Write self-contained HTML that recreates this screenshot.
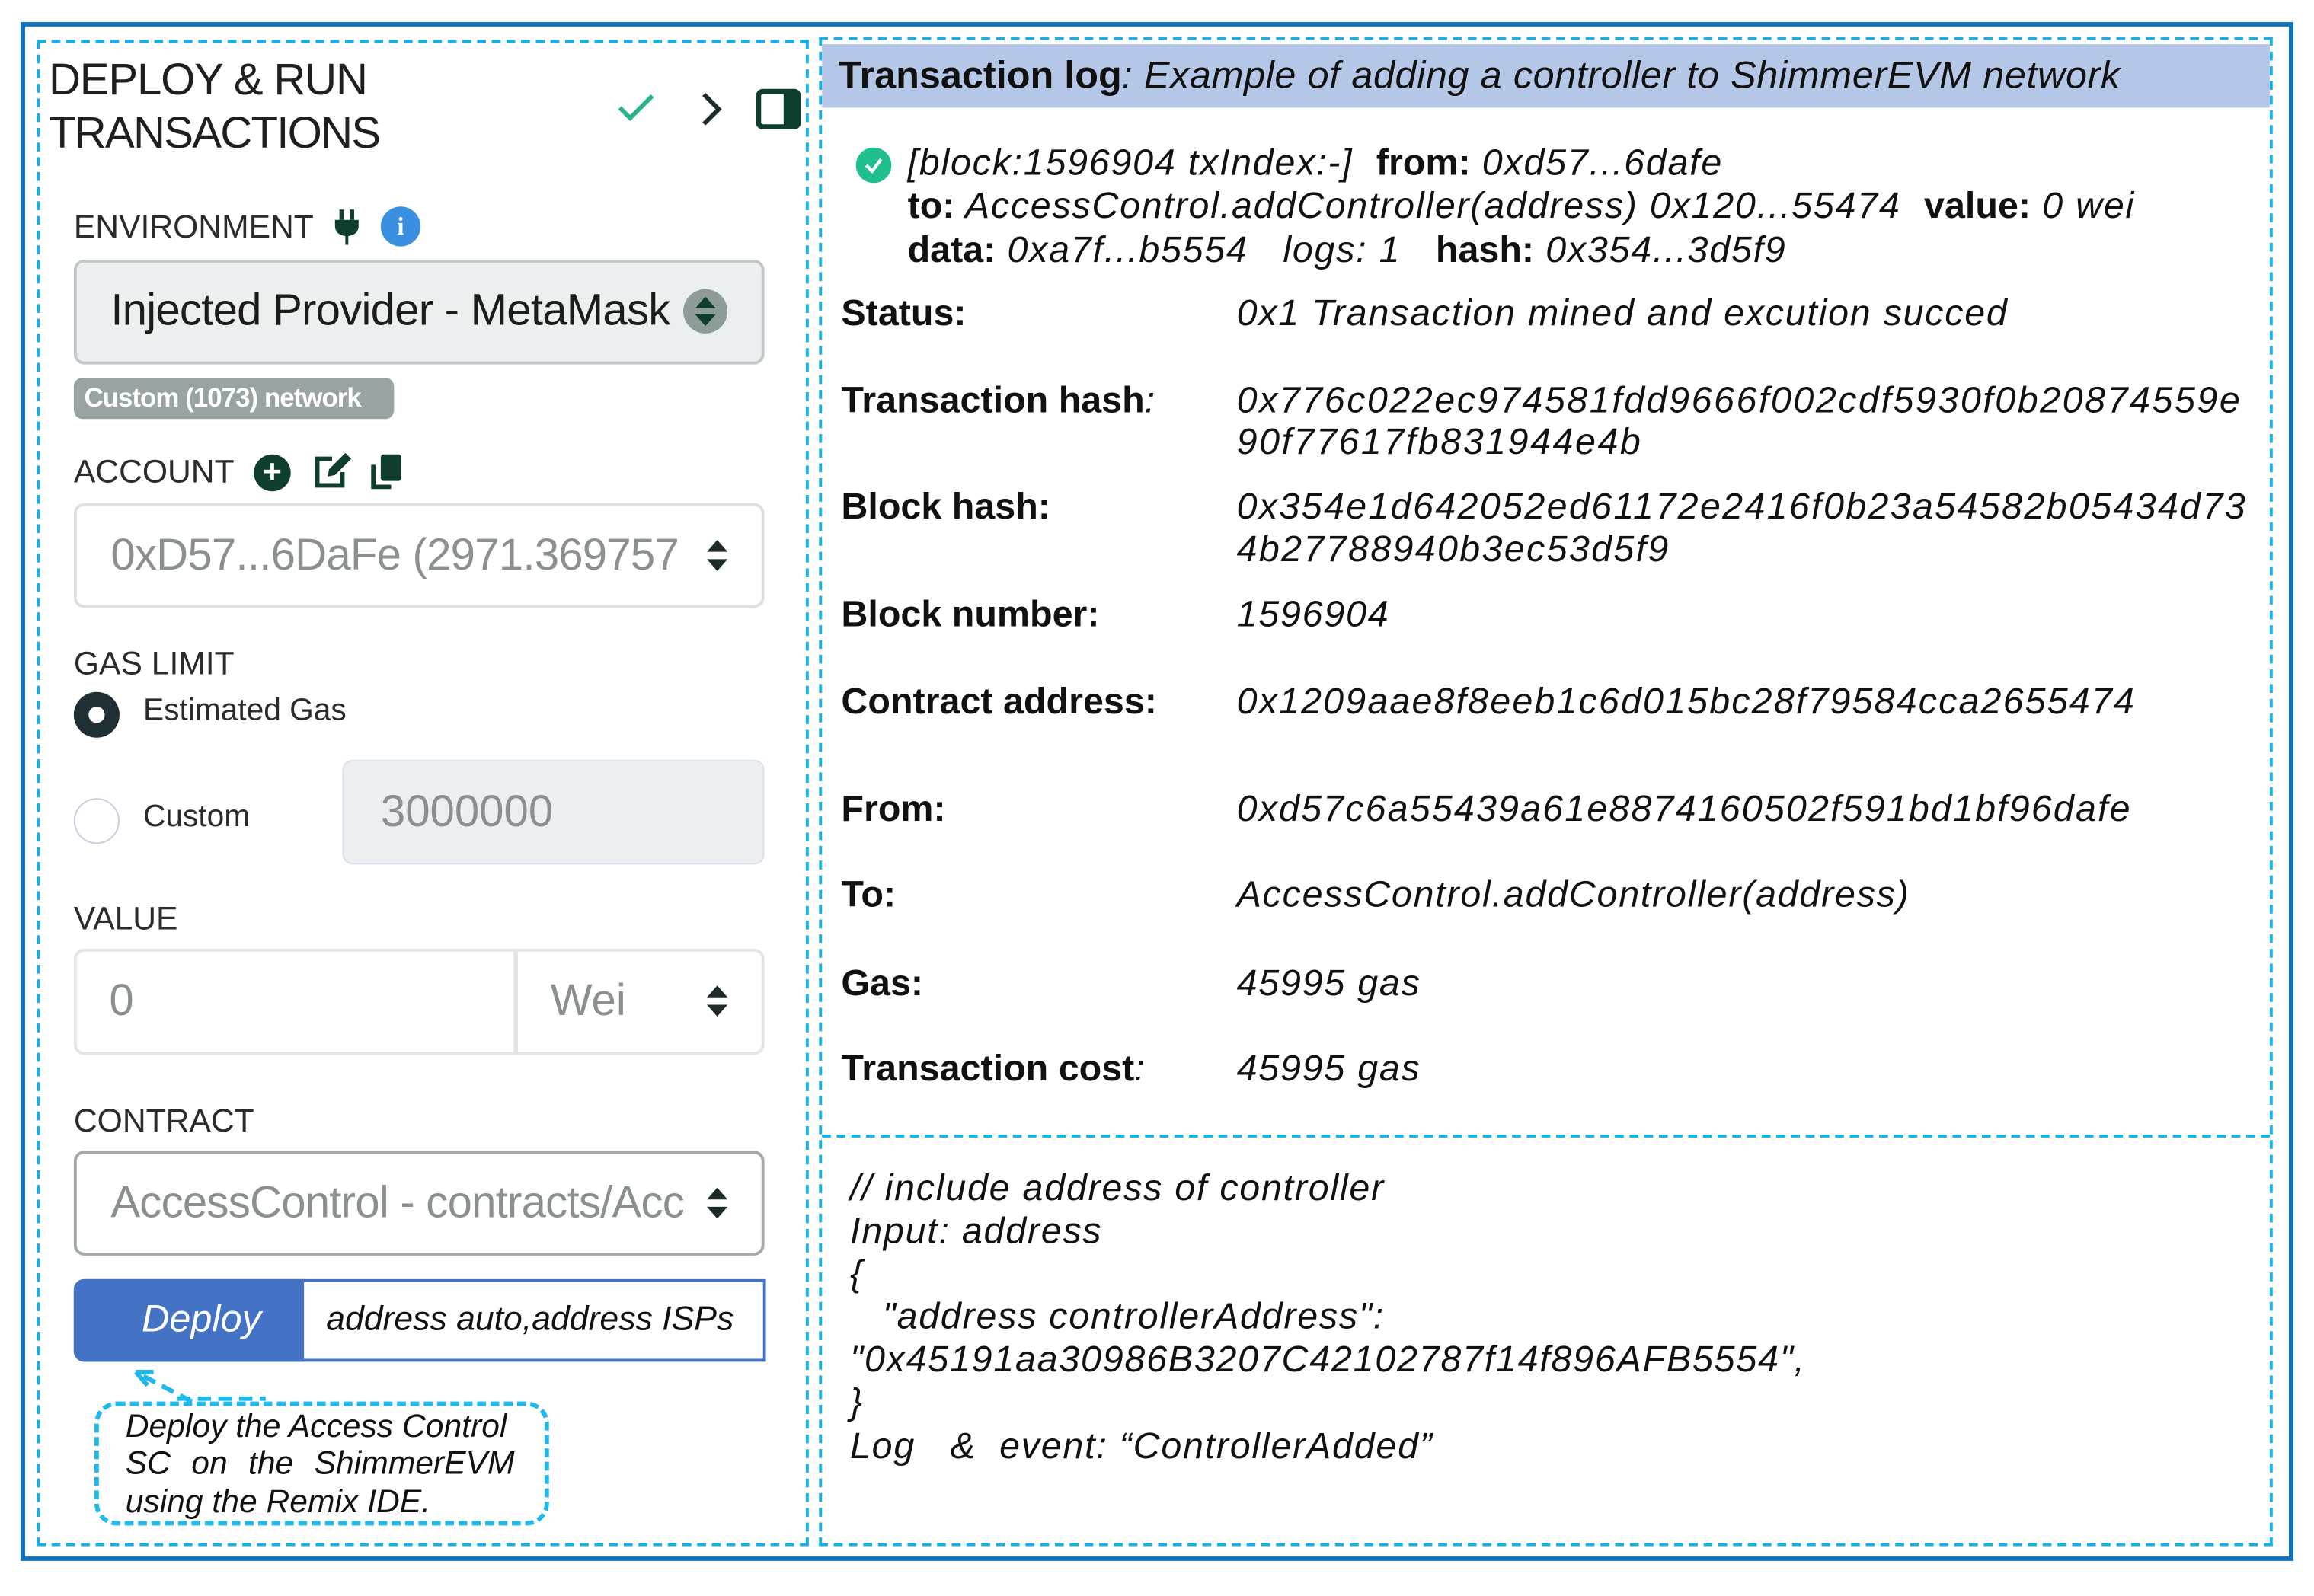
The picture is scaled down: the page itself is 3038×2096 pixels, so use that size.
<!DOCTYPE html>
<html><head><meta charset="utf-8"><style>
html,body{margin:0;padding:0;background:#fff;width:3038px;height:2095px;overflow:hidden}
#w{position:absolute;left:0;top:0;width:1568px;height:1082px;transform:scale(1.9375);transform-origin:0 0;font-family:"Liberation Sans",sans-serif;color:#222}
.a{position:absolute;white-space:nowrap}
.n{font-family:"Liberation Sans Narrow","Liberation Sans",sans-serif;color:#111}
.r{letter-spacing:0.9px}
.l{font-size:22px;color:#2b2b2b;transform:translateY(-50%)}
.c{transform:translateY(-50%)}
.box{position:absolute;box-sizing:border-box;border-radius:7px}
.i{font-style:italic}
.b{font-weight:bold;font-style:normal;letter-spacing:0}
</style></head><body><div id="w">
<div style="position:absolute;left:14px;top:15px;width:1540px;height:1043px;border:3px solid #0c74c4;box-sizing:border-box"></div>
<div style="position:absolute;left:25px;top:27px;width:523px;height:1021px;border:2.5px dashed #14b0ea;box-sizing:border-box"></div>
<div style="position:absolute;left:555px;top:25px;width:985px;height:1023px;border:2.5px dashed #14b0ea;box-sizing:border-box"></div>
<div style="position:absolute;left:557px;top:30px;width:981px;height:43px;background:#b4c7e7"></div>
<div style="position:absolute;left:557px;top:769px;width:981px;height:0;border-top:2.5px dashed #14b0ea"></div>

<!-- left -->
<div class="a c" style="left:33px;top:55px;font-size:30px;letter-spacing:-0.6px;color:#1f1f1f">DEPLOY &amp; RUN</div>
<div class="a c" style="left:33px;top:91px;font-size:30px;letter-spacing:-0.9px;color:#1f1f1f">TRANSACTIONS</div>
<svg class="a" style="left:417px;top:62px" width="28" height="22" viewBox="0 0 28 22"><path d="M3 11 L10 18 L25 3" fill="none" stroke="#2bb38e" stroke-width="3"/></svg>
<svg class="a" style="left:474px;top:62px" width="16" height="24" viewBox="0 0 16 24"><path d="M3 2 L13 12 L3 22" fill="none" stroke="#1c2b2b" stroke-width="3"/></svg>
<svg class="a" style="left:512px;top:60px" width="32" height="28" viewBox="0 0 32 28"><rect x="2" y="2" width="27" height="24" rx="3" fill="none" stroke="#0f3d2e" stroke-width="3.5"/><rect x="19" y="2" width="10" height="24" fill="#0f3d2e"/></svg>

<div class="a l" style="left:50px;top:154px">ENVIRONMENT</div>
<svg class="a" style="left:226px;top:142px" width="18" height="24" viewBox="0 0 18 24"><rect x="4" y="0" width="3" height="7" fill="#0f3d2e"/><rect x="11" y="0" width="3" height="7" fill="#0f3d2e"/><path d="M1 7 H17 V11 Q17 17 10 18 V24 H8 V18 Q1 17 1 11Z" fill="#0f3d2e"/></svg>
<div class="a" style="left:258px;top:140px;width:27px;height:27px;border-radius:50%;background:#3a8fe0;color:#fff;font:bold 17px 'Liberation Serif',serif;text-align:center;line-height:27px">i</div>
<div class="box" style="left:50px;top:176px;width:468px;height:71px;background:#eceff0;border:2px solid #c3c7ca"></div>
<div class="a c" style="left:75px;top:211px;font-size:30px;letter-spacing:-0.4px;color:#1c1c1c">Injected Provider - MetaMask</div>
<div class="a" style="left:463px;top:196px;width:30px;height:30px;border-radius:50%;background:#8d9c98"></div>
<svg class="a" style="left:469px;top:200px" width="18" height="22" viewBox="0 0 18 22"><path d="M9 1 L16 9 H2Z M2 13 H16 L9 21Z" fill="#0f3d2e"/></svg>
<div class="box" style="left:50px;top:256px;width:217px;height:28px;background:#99a3a4;border-radius:6px"></div>
<div class="a c" style="left:57px;top:270px;font-size:18px;font-weight:bold;color:#fff;letter-spacing:-0.5px">Custom (1073) network</div>

<div class="a l" style="left:50px;top:320px">ACCOUNT</div>
<div class="a" style="left:172px;top:308px;width:25px;height:25px;border-radius:50%;background:#0f3d2e;color:#fff;font:bold 22px/24px 'Liberation Sans';text-align:center">+</div>
<svg class="a" style="left:211px;top:306px" width="28" height="26" viewBox="0 0 28 26"><path d="M14 5 H4 V23 H21 V14" fill="none" stroke="#0f3d2e" stroke-width="3"/><path d="M11 17 L12 12 L23 1 L27 5 L16 16Z" fill="#0f3d2e"/></svg>
<svg class="a" style="left:250px;top:306px" width="24" height="26" viewBox="0 0 24 26"><path d="M3 9 V24 H15" fill="none" stroke="#0f3d2e" stroke-width="3"/><rect x="8" y="2" width="14" height="18" rx="2" fill="#0f3d2e"/></svg>
<div class="box" style="left:50px;top:341px;width:468px;height:71px;background:#fff;border:2px solid #dde0e3"></div>
<div class="a c" style="left:75px;top:377px;font-size:30px;letter-spacing:-0.4px;color:#8a8f90">0xD57...6DaFe (2971.369757</div>
<svg class="a" style="left:477px;top:365px" width="18" height="24" viewBox="0 0 18 24"><path d="M9 1 L16 9 H2Z M2 14 H16 L9 22Z" fill="#1f2a2a"/></svg>

<div class="a l" style="left:50px;top:450px">GAS LIMIT</div>
<div class="a" style="left:50px;top:469px;width:31px;height:31px;border-radius:50%;background:#1f2f33"></div>
<div class="a" style="left:60px;top:479px;width:11px;height:11px;border-radius:50%;background:#fff"></div>
<div class="a l" style="left:97px;top:482px;font-size:21px">Estimated Gas</div>
<div class="a" style="left:50px;top:541px;width:31px;height:31px;border-radius:50%;border:1.5px solid #ccd;box-sizing:border-box"></div>
<div class="a l" style="left:97px;top:554px;font-size:21px">Custom</div>
<div class="box" style="left:232px;top:515px;width:286px;height:71px;background:#eceff0;border:1px solid #dde"></div>
<div class="a c" style="left:258px;top:551px;font-size:30px;color:#8a8f90">3000000</div>

<div class="a l" style="left:50px;top:623px">VALUE</div>
<div class="box" style="left:50px;top:643px;width:300px;height:72px;border:2px solid #e2e5e8;border-radius:7px 0 0 7px"></div>
<div class="box" style="left:349px;top:643px;width:169px;height:72px;border:2px solid #e2e5e8;border-radius:0 7px 7px 0"></div>
<div class="a c" style="left:74px;top:679px;font-size:30px;color:#8a8f90">0</div>
<div class="a c" style="left:373px;top:679px;font-size:30px;color:#8a8f90">Wei</div>
<svg class="a" style="left:477px;top:667px" width="18" height="24" viewBox="0 0 18 24"><path d="M9 1 L16 9 H2Z M2 14 H16 L9 22Z" fill="#1f2a2a"/></svg>

<div class="a l" style="left:50px;top:760px">CONTRACT</div>
<div class="box" style="left:50px;top:780px;width:468px;height:71px;border:2px solid #a4a9ab"></div>
<div class="a c" style="left:75px;top:816px;font-size:30px;letter-spacing:-0.4px;color:#8a8f90;width:388px;overflow:hidden">AccessControl - contracts/Access</div>
<svg class="a" style="left:477px;top:804px" width="18" height="24" viewBox="0 0 18 24"><path d="M9 1 L16 9 H2Z M2 14 H16 L9 22Z" fill="#1f2a2a"/></svg>

<div class="box" style="left:50px;top:867px;width:469px;height:56px;border:2.5px solid #4472c4;border-radius:7px 0 0 7px"></div>
<div class="box" style="left:50px;top:867px;width:156px;height:56px;background:#4472c4;border-radius:7px 0 0 7px"></div>
<div class="a c n i" style="left:96px;top:894px;font-size:26px;color:#fff">Deploy</div>
<div class="a c n i" style="left:221px;top:894px;font-size:23px">address auto,address ISPs</div>

<svg class="a" style="left:60px;top:920px" width="320" height="120" viewBox="0 0 320 120"><path d="M70 30 L32 10" stroke="#1fb8ea" stroke-width="3" stroke-dasharray="9 5" fill="none"/><path d="M32 10 L44 10 M32 10 L40 19" stroke="#1fb8ea" stroke-width="3" fill="none"/><path d="M60 28 L120 28" stroke="#1fb8ea" stroke-width="3" stroke-dasharray="9 5"/></svg>
<div class="box" style="left:64px;top:950px;width:308px;height:84px;border:3px dashed #1fb8ea;border-radius:15px"></div>
<div class="a c n i" style="left:85px;top:967px;font-size:22px">Deploy the Access Control</div>
<div class="a c n i" style="left:85px;top:992px;font-size:22px;word-spacing:8px">SC on the ShimmerEVM</div>
<div class="a c n i" style="left:85px;top:1018px;font-size:22px">using the Remix IDE.</div>

<!-- right -->
<div class="a c n" style="left:568px;top:51px;font-size:26px"><span class="b">Transaction log</span><span class="i" style="letter-spacing:0.3px">: Example of adding a controller to ShimmerEVM network</span></div>
<div class="a" style="left:580px;top:100px;width:24px;height:24px;border-radius:50%;background:#1fbf8f"></div>
<svg class="a" style="left:584px;top:104px" width="16" height="16" viewBox="0 0 16 16"><path d="M3 8 L7 12 L13 4" stroke="#fff" stroke-width="2.2" fill="none"/></svg>
<div class="a c n i r" style="left:615px;top:111px;font-size:25px">[block:1596904 txIndex:-]&nbsp; <span class="b">from:</span> 0xd57...6dafe</div>
<div class="a c n i r" style="left:615px;top:140px;font-size:25px"><span class="b">to:</span> AccessControl.addController(address) 0x120...55474&nbsp; <span class="b">value:</span> 0 wei</div>
<div class="a c n i r" style="left:615px;top:170px;font-size:25px"><span class="b">data:</span> 0xa7f...b5554&nbsp;&nbsp; logs: 1&nbsp;&nbsp; <span class="b">hash:</span> 0x354...3d5f9</div>

<div class="a c n b" style="left:570px;top:213px;font-size:25px">Status:</div>
<div class="a c n i r" style="left:838px;top:213px;font-size:25px">0x1 Transaction mined and excution succed</div>
<div class="a c n" style="left:570px;top:272px;font-size:25px"><span class="b">Transaction hash</span><span class="i">:</span></div>
<div class="a c n i" style="left:838px;top:272px;font-size:25px;letter-spacing:1.3px">0x776c022ec974581fdd9666f002cdf5930f0b20874559e</div>
<div class="a c n i" style="left:838px;top:300px;font-size:25px;letter-spacing:1.3px">90f77617fb831944e4b</div>
<div class="a c n b" style="left:570px;top:344px;font-size:25px">Block hash:</div>
<div class="a c n i" style="left:838px;top:344px;font-size:25px;letter-spacing:1.2px">0x354e1d642052ed61172e2416f0b23a54582b05434d73</div>
<div class="a c n i" style="left:838px;top:373px;font-size:25px;letter-spacing:1.2px">4b27788940b3ec53d5f9</div>
<div class="a c n b" style="left:570px;top:417px;font-size:25px">Block number:</div>
<div class="a c n i r" style="left:838px;top:417px;font-size:25px">1596904</div>
<div class="a c n b" style="left:570px;top:476px;font-size:25px">Contract address:</div>
<div class="a c n i" style="left:838px;top:476px;font-size:25px;letter-spacing:1.1px">0x1209aae8f8eeb1c6d015bc28f79584cca2655474</div>
<div class="a c n b" style="left:570px;top:549px;font-size:25px">From:</div>
<div class="a c n i" style="left:838px;top:549px;font-size:25px;letter-spacing:1.1px">0xd57c6a55439a61e8874160502f591bd1bf96dafe</div>
<div class="a c n b" style="left:570px;top:607px;font-size:25px">To:</div>
<div class="a c n i r" style="left:838px;top:607px;font-size:25px">AccessControl.addController(address)</div>
<div class="a c n b" style="left:570px;top:667px;font-size:25px">Gas:</div>
<div class="a c n i r" style="left:838px;top:667px;font-size:25px">45995 gas</div>
<div class="a c n" style="left:570px;top:725px;font-size:25px"><span class="b">Transaction cost</span><span class="i">:</span></div>
<div class="a c n i r" style="left:838px;top:725px;font-size:25px">45995 gas</div>

<div class="a c n i r" style="left:576px;top:806px;font-size:25px">// include address of controller</div>
<div class="a c n i r" style="left:576px;top:835px;font-size:25px">Input: address</div>
<div class="a c n i" style="left:576px;top:864px;font-size:25px">{</div>
<div class="a c n i r" style="left:598px;top:893px;font-size:25px">"address controllerAddress":</div>
<div class="a c n i r" style="left:576px;top:922px;font-size:25px">"0x45191aa30986B3207C42102787f14f896AFB5554",</div>
<div class="a c n i" style="left:576px;top:951px;font-size:25px">}</div>
<div class="a c n i r" style="left:576px;top:981px;font-size:25px">Log &nbsp; &amp;&nbsp; event: “ControllerAdded”</div>
</div></body></html>
